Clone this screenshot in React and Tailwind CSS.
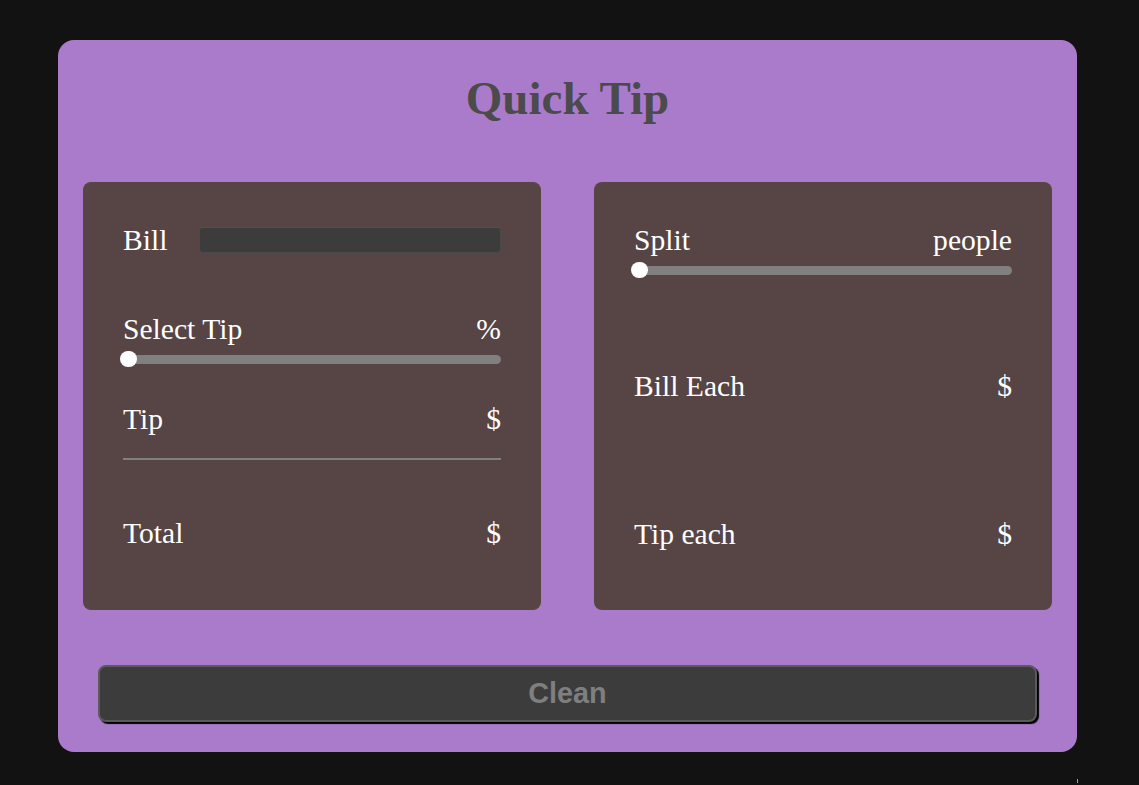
import React from "react";

const serif = { fontFamily: '"Liberation Serif", "Times New Roman", serif' };

const Slider = () => (
  <div className="relative h-4 flex items-center">
    <div className="w-full h-[9px] rounded-full bg-[#808080]" />
    <span className="absolute left-[-3px] top-0 w-[17px] h-[16px] rounded-full bg-white" />
  </div>
);

const Row = ({ left, right, className = "" }) => (
  <div className={`flex items-center justify-between h-9 leading-9 ${className}`}>
    <span>{left}</span>
    <span>{right}</span>
  </div>
);

export default function App() {
  return (
    <div className="min-h-[785px] bg-[#121212] pt-10 pl-[58px]" style={serif}>
      <div className="w-[1019px] h-[712px] rounded-2xl bg-[#ab7bcb] flex flex-col px-[25px]">
        <h1 className="text-center text-[47px] font-bold text-[#4b4b4b] leading-[56px] mt-[30px]">
          Quick Tip
        </h1>

        <div className="flex gap-[53px] mt-[56px] text-white text-[29.6px]">
          <section className="w-[458px] h-[428px] rounded-lg bg-[#574545] px-10 pt-10">
            <div className="flex items-center h-9">
              <span className="leading-9">Bill</span>
              <input
                type="text"
                className="ml-auto w-[302px] h-[26px] rounded bg-[#3c3c3c] border border-[#4a4a4a] border-t-[#505050] outline-none"
              />
            </div>
            <Row left="Select Tip" right="%" className="mt-[53px]" />
            <div className="mt-[4px]">
              <Slider />
            </div>
            <Row left="Tip" right="$" className="mt-[34px]" />
            <div className="mt-[21px] h-[2px] bg-[#808080]" />
            <Row left="Total" right="$" className="mt-[55px]" />
          </section>

          <section className="w-[458px] h-[428px] rounded-lg bg-[#574545] px-10 pt-10">
            <Row left="Split" right="people" />
            <div className="mt-[4px]">
              <Slider />
            </div>
            <Row left="Bill Each" right="$" className="mt-[90px]" />
            <Row left="Tip each" right="$" className="mt-[112px]" />
          </section>
        </div>

        <button
          type="button"
          className="mx-[15px] mt-[55px] h-[57px] rounded-lg bg-[#3c3c3c] border-2 border-[#5a5a5a] shadow-[2px_2px_1px_#000] text-[#7f7f7f] text-[28.8px] font-bold"
          style={{ fontFamily: '"Liberation Sans", Arial, sans-serif' }}
        >
          Clean
        </button>
      </div>
      <div className="mt-[27px] ml-[1019px] w-px h-1 bg-[#2bd4d4]" />
    </div>
  );
}
